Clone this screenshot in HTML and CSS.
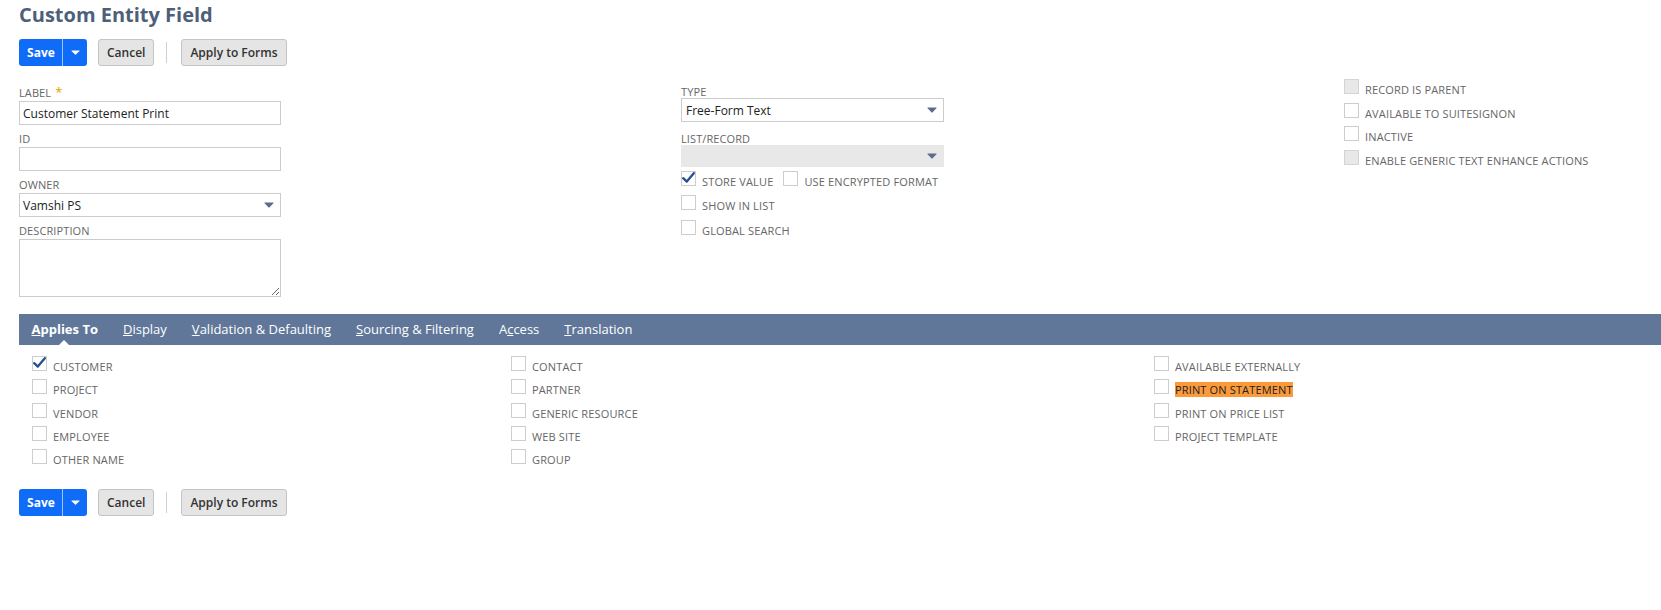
FILE: index.html
```html
<!DOCTYPE html>
<html>
<head>
<meta charset="utf-8">
<title>Custom Entity Field</title>
<link rel="stylesheet" href="styles.css">
</head>
<body>
<div class="page">
  <h1 class="title">Custom Entity Field</h1>
  <div class="btnbar">
    <div class="split">
      <button class="save">Save</button><span class="split-div"></span><button class="save-menu"><svg width="9" height="5" viewBox="0 0 9 5"><path d="M0.6 0.4 H8.4 Q8.9 0.4 8.5 0.9 L4.9 4.5 Q4.5 4.9 4.1 4.5 L0.5 0.9 Q0.1 0.4 0.6 0.4 Z" fill="#fff"/></svg></button>
    </div>
    <button class="btn">Cancel</button>
    <span class="sep"></span>
    <button class="btn">Apply to Forms</button>
  </div>

  <div class="fields">
    <div class="col col1">
      <div class="field">
        <label class="flabel">LABEL<span class="req">*</span></label>
        <input class="text" type="text" value="Customer Statement Print">
      </div>
      <div class="field">
        <label class="flabel">ID</label>
        <input class="text" type="text" value="">
      </div>
      <div class="field">
        <label class="flabel">OWNER</label>
        <div class="select"><span>Vamshi PS</span><svg class="arr" width="10" height="6" viewBox="0 0 10 6"><path d="M0.5 0.5 H9.5 Q9.9 0.5 9.6 0.9 L5.4 5.4 Q5 5.8 4.6 5.4 L0.4 0.9 Q0.1 0.5 0.5 0.5 Z" fill="#5b6d8b"/></svg></div>
      </div>
      <div class="field">
        <label class="flabel">DESCRIPTION</label>
        <textarea class="area"></textarea>
      </div>
    </div>

    <div class="col col2">
      <div class="field">
        <label class="flabel tight">TYPE</label>
        <div class="select"><span>Free-Form Text</span><svg class="arr" width="10" height="6" viewBox="0 0 10 6"><path d="M0.5 0.5 H9.5 Q9.9 0.5 9.6 0.9 L5.4 5.4 Q5 5.8 4.6 5.4 L0.4 0.9 Q0.1 0.5 0.5 0.5 Z" fill="#5b6d8b"/></svg></div>
      </div>
      <div class="field list">
        <label class="flabel tight">LIST/RECORD</label>
        <div class="select disabled"><span></span><svg class="arr" width="10" height="6" viewBox="0 0 10 6"><path d="M0.5 0.5 H9.5 Q9.9 0.5 9.6 0.9 L5.4 5.4 Q5 5.8 4.6 5.4 L0.4 0.9 Q0.1 0.5 0.5 0.5 Z" fill="#5b6d8b"/></svg></div>
      </div>
      <div class="cbs cbs2">
        <div class="cb"><span class="box"><svg width="13" height="13" viewBox="0 0 13 13"><path d="M1.2 6.2 L4.8 9.6 L11.8 1.2" fill="none" stroke="#24508f" stroke-width="2.3" stroke-linecap="round" stroke-linejoin="round"/></svg></span><span>STORE VALUE</span><span class="box second"></span><span>USE ENCRYPTED FORMAT</span></div>
        <div class="cb"><span class="box"></span><span>SHOW IN LIST</span></div>
        <div class="cb"><span class="box"></span><span>GLOBAL SEARCH</span></div>
      </div>
    </div>

    <div class="col col3">
      <div class="cbs cbs3">
        <div class="cb"><span class="box dis"></span><span>RECORD IS PARENT</span></div>
        <div class="cb"><span class="box"></span><span>AVAILABLE TO SUITESIGNON</span></div>
        <div class="cb"><span class="box"></span><span>INACTIVE</span></div>
        <div class="cb"><span class="box dis"></span><span>ENABLE GENERIC TEXT ENHANCE ACTIONS</span></div>
      </div>
    </div>
  </div>

  <div class="tabs">
    <span class="tab active"><u>A</u>pplies To</span>
    <span class="tab"><u>D</u>isplay</span>
    <span class="tab"><u>V</u>alidation &amp; Defaulting</span>
    <span class="tab"><u>S</u>ourcing &amp; Filtering</span>
    <span class="tab">A<u>c</u>cess</span>
    <span class="tab"><u>T</u>ranslation</span>
  </div>

  <div class="tabbody">
    <div class="cbs">
      <div class="cb"><span class="box"><svg width="13" height="13" viewBox="0 0 13 13"><path d="M1.2 6.2 L4.8 9.6 L11.8 1.2" fill="none" stroke="#24508f" stroke-width="2.3" stroke-linecap="round" stroke-linejoin="round"/></svg></span><span>CUSTOMER</span></div>
      <div class="cb"><span class="box"></span><span>PROJECT</span></div>
      <div class="cb"><span class="box"></span><span>VENDOR</span></div>
      <div class="cb"><span class="box"></span><span>EMPLOYEE</span></div>
      <div class="cb"><span class="box"></span><span>OTHER NAME</span></div>
    </div>
    <div class="cbs">
      <div class="cb"><span class="box"></span><span>CONTACT</span></div>
      <div class="cb"><span class="box"></span><span>PARTNER</span></div>
      <div class="cb"><span class="box"></span><span>GENERIC RESOURCE</span></div>
      <div class="cb"><span class="box"></span><span>WEB SITE</span></div>
      <div class="cb"><span class="box"></span><span>GROUP</span></div>
    </div>
    <div class="cbs">
      <div class="cb"><span class="box"></span><span>AVAILABLE EXTERNALLY</span></div>
      <div class="cb"><span class="box"></span><span class="hl">PRINT ON STATEMENT</span></div>
      <div class="cb"><span class="box"></span><span>PRINT ON PRICE LIST</span></div>
      <div class="cb"><span class="box"></span><span>PROJECT TEMPLATE</span></div>
    </div>
  </div>

  <div class="btnbar bottom">
    <div class="split">
      <button class="save">Save</button><span class="split-div"></span><button class="save-menu"><svg width="9" height="5" viewBox="0 0 9 5"><path d="M0.6 0.4 H8.4 Q8.9 0.4 8.5 0.9 L4.9 4.5 Q4.5 4.9 4.1 4.5 L0.5 0.9 Q0.1 0.4 0.6 0.4 Z" fill="#fff"/></svg></button>
    </div>
    <button class="btn">Cancel</button>
    <span class="sep"></span>
    <button class="btn">Apply to Forms</button>
  </div>
</div>
</body>
</html>
```

FILE: styles.css
```css
body {
  margin: 0;
  background: #fff;
  color: #333;
  font-family: "Open Sans", "Liberation Sans", sans-serif;
}

.page {
  padding-left: 19px;
}

.title {
  margin: 0;
  padding-top: 2px;
  font-size: 20px;
  line-height: 26px;
  font-weight: 700;
  color: #4d5f79;
}

/* buttons */
.btnbar {
  display: flex;
  align-items: center;
  height: 27px;
  margin-top: 11px;
}
.btnbar.bottom {
  margin-top: 17px;
}

button {
  font-family: "Open Sans", "Liberation Sans", sans-serif;
  margin: 0;
  cursor: pointer;
}

.split {
  display: flex;
  height: 27px;
  background: #0f6cf8;
  border-radius: 3px;
  overflow: hidden;
}
.save {
  width: 43px;
  height: 27px;
  border: 0;
  background: transparent;
  color: #fff;
  font-size: 12px;
  font-weight: 700;
  padding: 0 0 0 1px;
}
.split-div {
  width: 1px;
  background: rgba(255, 255, 255, 0.6);
}
.save-menu {
  width: 24px;
  height: 27px;
  border: 0;
  background: transparent;
  padding: 0;
  display: flex;
  align-items: center;
  justify-content: center;
}
.save-menu svg {
  display: block;
}

.btn {
  height: 27px;
  box-sizing: border-box;
  border: 1px solid #c4c4c4;
  background: #e5e5e5;
  border-radius: 3px;
  color: #333;
  font-size: 12px;
  font-weight: 600;
  padding: 0 8px;
  margin-left: 11px;
}
.sep {
  width: 1px;
  height: 21px;
  background: #cfcfcf;
  margin: 0 14px 0 12px;
}
.sep + .btn {
  margin-left: 0;
}

/* main fields */
.fields {
  display: grid;
  grid-template-columns: 662px 663px auto;
  align-items: start;
  margin-top: 13px;
}

.field {
  margin-top: 6px;
}
.field.list {
  margin-top: 10px;
}

.flabel {
  display: block;
  font-size: 11px;
  line-height: 15px;
  color: #666;
  margin-bottom: 1px;
  letter-spacing: 0.1px;
}
.flabel.tight {
  line-height: 13px;
  margin-bottom: 0;
}
.req {
  color: #dfa000;
  font-size: 13px;
  line-height: 1px;
  margin-left: 4px;
}

.text {
  display: block;
  width: 262px;
  height: 24px;
  box-sizing: border-box;
  border: 1px solid #cccccc;
  margin: 0;
  padding: 0 3px;
  font-family: "Open Sans", "Liberation Sans", sans-serif;
  font-size: 12px;
  color: #222;
  background: #fff;
  outline: none;
}

.select {
  display: flex;
  align-items: center;
  justify-content: space-between;
  width: 263px;
  height: 24px;
  box-sizing: border-box;
  border: 1px solid #cccccc;
  padding: 0 6px 0 4px;
  font-size: 12px;
  color: #222;
  background: #fff;
}
.col1 .select {
  width: 262px;
  padding-left: 3px;
}
.select.disabled {
  height: 22px;
  background: #e8e8e8;
  border-color: #e8e8e8;
}
.arr {
  display: block;
  flex: none;
}

.area {
  display: block;
  width: 262px;
  height: 58px;
  box-sizing: border-box;
  border: 1px solid #cccccc;
  margin: 0;
  padding: 2px 3px;
  font-family: "Open Sans", "Liberation Sans", sans-serif;
  font-size: 12px;
  resize: both;
  outline: none;
}

/* checkboxes */
.cb {
  display: block;
  font-size: 11px;
  color: #666;
  letter-spacing: 0.15px;
  white-space: nowrap;
  height: 23.33px;
  line-height: 23.33px;
}
.box {
  display: inline-block;
  position: relative;
  width: 15px;
  height: 15px;
  box-sizing: border-box;
  border: 1px solid #cdcdcd;
  background: #fff;
  vertical-align: baseline;
  overflow: hidden;
  margin-right: 6px;
}
.box svg {
  display: block;
}
.box.dis {
  background: #e8e8e8;
  border-color: #d4d4d4;
}
.box.second {
  margin-left: 10px;
}

.cbs2 {
  margin-top: 2.5px;
}
.cbs2 .cb {
  height: 24.5px;
  line-height: 24.5px;
}
.col3 {
  margin-top: -1px;
}
.cbs3 .cb {
  height: 23.67px;
  line-height: 23.67px;
}

.hl {
  background: #fb9a3a;
  color: #222;
}

/* tabs */
.tabs {
  display: flex;
  height: 31px;
  margin-top: 17px;
  background: #607799;
}
.tab {
  position: relative;
  padding: 0 12.5px;
  font-size: 13px;
  line-height: 31px;
  color: #fff;
  white-space: nowrap;
}
.tab.active {
  font-weight: 700;
}
.tab.active::after {
  content: "";
  position: absolute;
  left: 50%;
  bottom: 0;
  margin-left: -6px;
  border-left: 5px solid transparent;
  border-right: 5px solid transparent;
  border-bottom: 5px solid #fff;
}

.tabbody {
  display: grid;
  grid-template-columns: 479px 643px auto;
  padding: 10px 0 0 13px;
}
```
